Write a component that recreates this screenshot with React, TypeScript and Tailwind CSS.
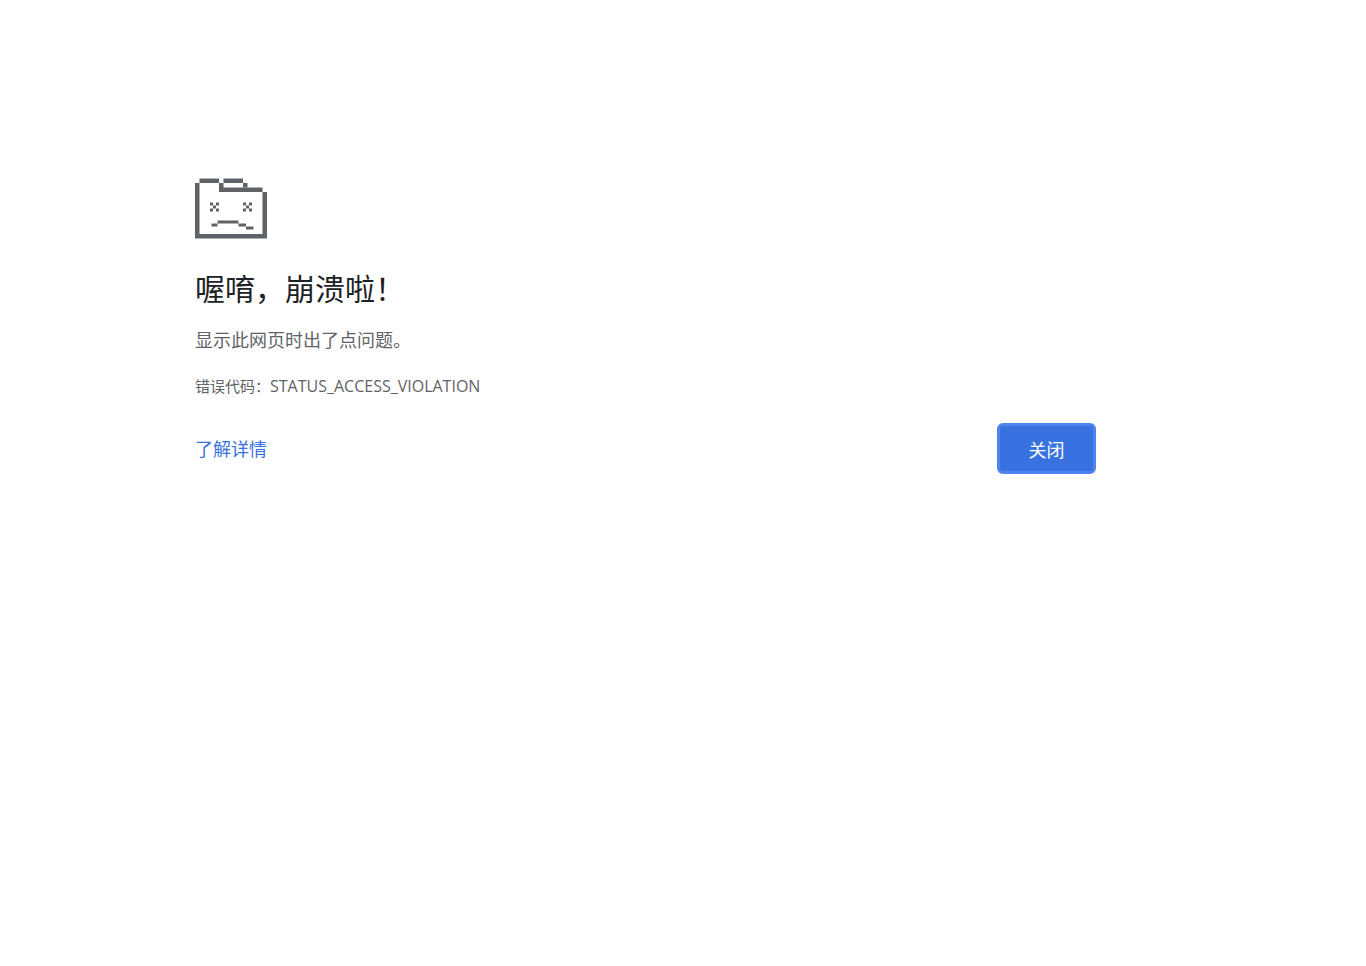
const errorCode = "STATUS_ACCESS_VIOLATION";

const SadFolderIcon = () => {
  return (
    <svg
      width="72"
      height="61"
      viewBox="0 0 72 61"
      fill="#5f6368"
      aria-hidden="true"
    >
      {/* Folder outline */}
      <path d="M4.5 .5H24V5H4.5z" />
      <path d="M28.5 .5H48V5H28.5z" />
      <path d="M24 5h4.5v4.5h39V14H24z" />
      <path d="M48 5h4.5v4.5H48z" />
      <path d="M0 5h4.5v51h63V14H72v46.5H0z" />
      {/* Eyes */}
      <path d="M15 24.5h3v3h-3zM21 24.5h3v3h-3zM18 27.5h3v3h-3zM15 30.5h3v3h-3zM21 30.5h3v3h-3z" />
      <path d="M48 24.5h3v3h-3zM54 24.5h3v3h-3zM51 27.5h3v3h-3zM48 30.5h3v3h-3zM54 30.5h3v3h-3z" />
      {/* Mouth */}
      <path d="M16.5 45.5h6v3h-6zM22.5 42.5h21v3h-21zM43.5 45.5H51v3h-7.5zM51 48.5h7.5v3H51z" />
    </svg>
  );
};

export default function App() {
  return (
    <div className="min-h-screen bg-white px-6 pt-[178px] font-['Open_Sans','Noto_Sans_CJK_SC',sans-serif] text-[#5f6368] lg:pl-[195px]">
      <main className="max-w-[901px]">
        <SadFolderIcon />

        <h1 className="mt-8 text-[30px] leading-9 text-[#202124]">
          喔唷，崩溃啦！
        </h1>
        <p className="mt-[19px] text-lg leading-7">
          显示此网页时出了点问题。
        </p>
        <p className="mt-5 text-[15px] leading-6">
          错误代码：<span className="text-base leading-6">{errorCode}</span>
        </p>

        <div className="mt-[25px] flex items-center justify-between">
          <a href="#details" className="text-lg leading-7 text-[#3871e0]">
            了解详情
          </a>
          <button
            type="button"
            className="min-w-[99px] cursor-pointer rounded-md border-3 border-[#5083ed] bg-[#3871e0] px-7 pt-[10px] pb-[7px] text-lg leading-7 text-white"
          >
            关闭
          </button>
        </div>
      </main>
    </div>
  );
}
